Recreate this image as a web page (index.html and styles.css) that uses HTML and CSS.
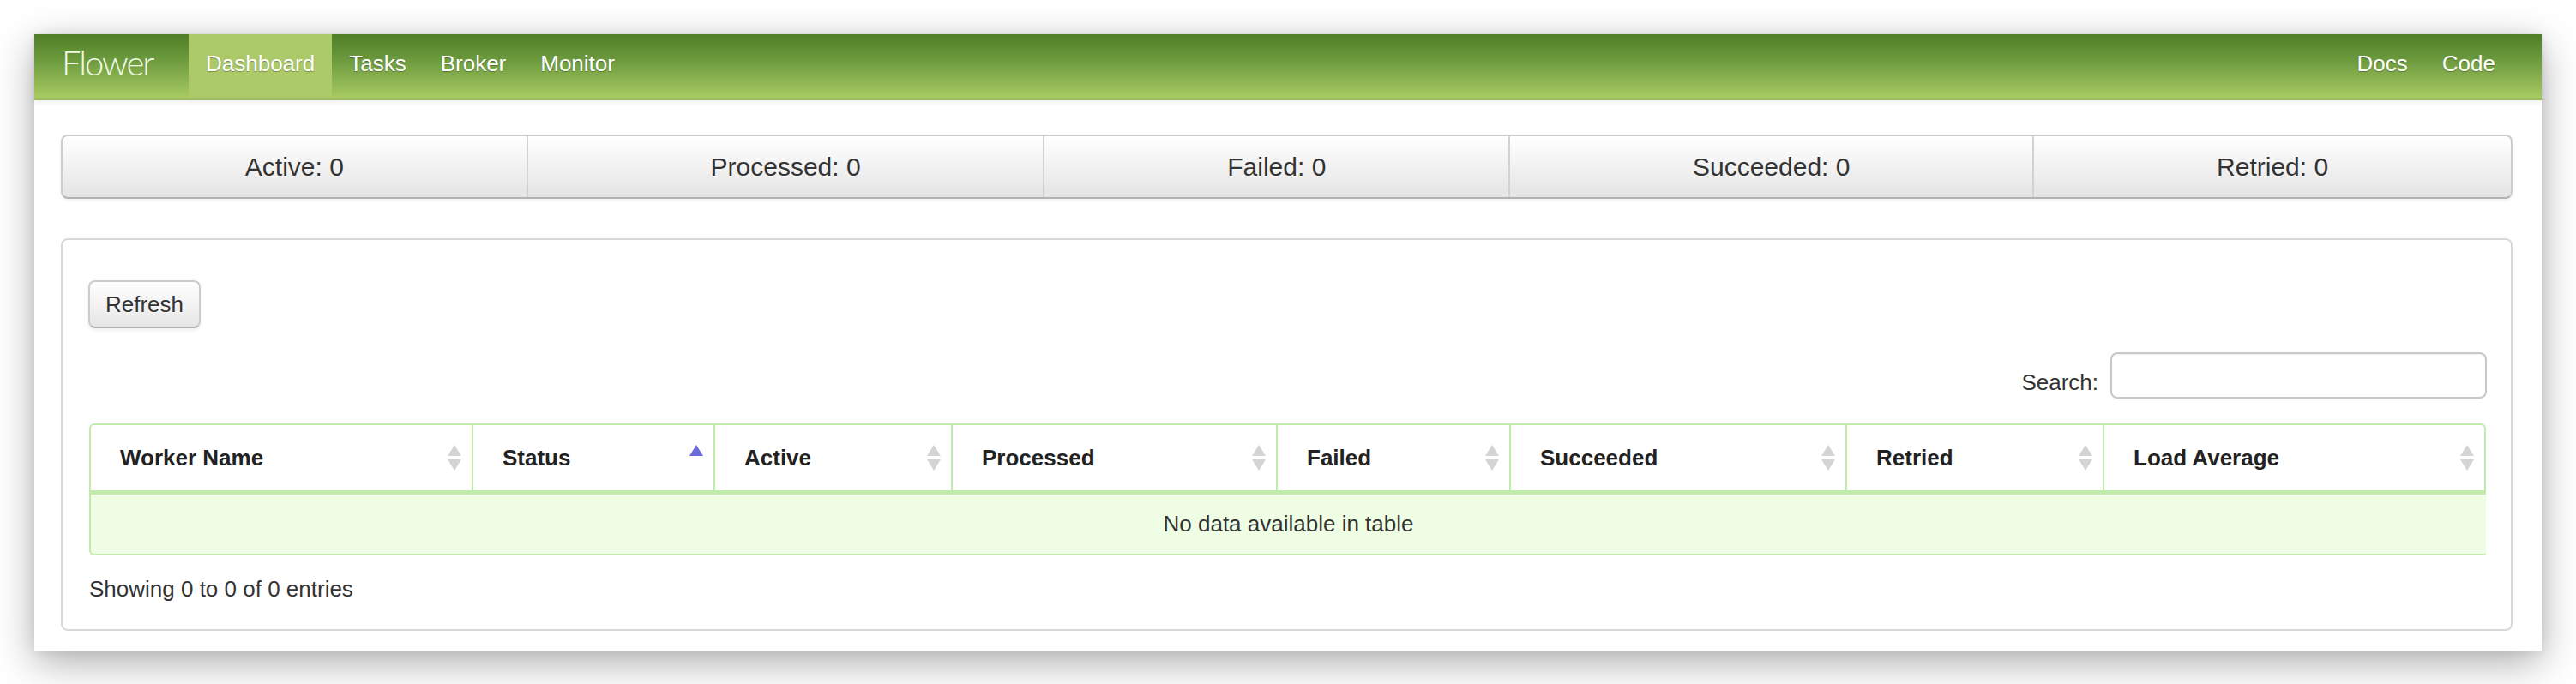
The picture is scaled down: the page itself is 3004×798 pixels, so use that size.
FILE: index.html
```html
<!DOCTYPE html>
<html lang="en">
<head>
<meta charset="utf-8">
<title>Flower</title>
<link rel="stylesheet" href="styles.css">
</head>
<body>
<div class="window">
  <header class="navbar">
    <a class="brand">Flower</a>
    <ul class="nav">
      <li class="active"><a>Dashboard</a></li>
      <li><a>Tasks</a></li>
      <li><a>Broker</a></li>
      <li><a>Monitor</a></li>
    </ul>
    <ul class="nav nav-right">
      <li><a>Docs</a></li>
      <li><a>Code</a></li>
    </ul>
  </header>
  <main class="content">
    <div class="stats">
      <div class="stat">Active: 0</div>
      <div class="stat">Processed: 0</div>
      <div class="stat">Failed: 0</div>
      <div class="stat">Succeeded: 0</div>
      <div class="stat">Retried: 0</div>
    </div>
    <section class="panel">
      <div class="toolbar"><button class="btn" type="button">Refresh</button></div>
      <div class="filter"><label class="filter-label">Search:</label><input class="filter-input" type="search"></div>
      <table class="workers">
        <thead>
          <tr>
            <th class="c-name"><div class="th-inner"><span>Worker Name</span><svg class="sort" viewBox="0 0 16 30"><polygon points="8,0 16,13 0,13"/><polygon points="0,17 16,17 8,30"/></svg></div></th>
            <th class="c-status"><div class="th-inner"><span>Status</span><svg class="sort asc" viewBox="0 0 16 30"><polygon points="8,0 16,13 0,13"/></svg></div></th>
            <th class="c-active"><div class="th-inner"><span>Active</span><svg class="sort" viewBox="0 0 16 30"><polygon points="8,0 16,13 0,13"/><polygon points="0,17 16,17 8,30"/></svg></div></th>
            <th class="c-processed"><div class="th-inner"><span>Processed</span><svg class="sort" viewBox="0 0 16 30"><polygon points="8,0 16,13 0,13"/><polygon points="0,17 16,17 8,30"/></svg></div></th>
            <th class="c-failed"><div class="th-inner"><span>Failed</span><svg class="sort" viewBox="0 0 16 30"><polygon points="8,0 16,13 0,13"/><polygon points="0,17 16,17 8,30"/></svg></div></th>
            <th class="c-succeeded"><div class="th-inner"><span>Succeeded</span><svg class="sort" viewBox="0 0 16 30"><polygon points="8,0 16,13 0,13"/><polygon points="0,17 16,17 8,30"/></svg></div></th>
            <th class="c-retried"><div class="th-inner"><span>Retried</span><svg class="sort" viewBox="0 0 16 30"><polygon points="8,0 16,13 0,13"/><polygon points="0,17 16,17 8,30"/></svg></div></th>
            <th class="c-load"><div class="th-inner"><span>Load Average</span><svg class="sort" viewBox="0 0 16 30"><polygon points="8,0 16,13 0,13"/><polygon points="0,17 16,17 8,30"/></svg></div></th>
          </tr>
        </thead>
        <tbody>
          <tr><td class="empty" colspan="8">No data available in table</td></tr>
        </tbody>
      </table>
      <div class="info">Showing 0 to 0 of 0 entries</div>
    </section>
  </main>
</div>
</body>
</html>
```
FILE: styles.css
```css
* { box-sizing: border-box; }
html, body { margin: 0; padding: 0; background: #ffffff; }
body {
  padding: 40px;
  font-family: "Liberation Sans", Arial, Helvetica, sans-serif;
  font-size: 26px;
  color: #333333;
}
.window {
  width: 2924px;
  background: #ffffff;
  box-shadow: 0 14px 44px rgba(0, 0, 0, 0.32), 0 0 14px rgba(0, 0, 0, 0.08);
}

/* navbar */
.navbar {
  display: flex;
  align-items: stretch;
  height: 77px;
  padding: 0 34px 0 32px;
  background: linear-gradient(to bottom, #4f7e27 0%, #6c9a3d 40%, #a7ca63 100%);
  border-bottom: 3px solid #9cbc59;
  box-shadow: 0 2px 6px rgba(0, 0, 0, 0.08);
}
.brand {
  flex: 0 0 148px;
  display: flex;
  align-items: center;
  padding-bottom: 9px;
  font-family: Lato, "Liberation Sans", sans-serif;
  font-weight: 300;
  font-size: 40px;
  letter-spacing: -2px;
  color: #f1f8e8;
}
.nav {
  display: flex;
  margin: 0;
  padding: 0;
  list-style: none;
}
.nav-right { margin-left: auto; }
.nav li { display: flex; }
.nav a {
  display: flex;
  align-items: center;
  padding: 0 20px 6px;
  color: #ffffff;
  font-size: 26px;
  text-shadow: 0 1px 1px rgba(0, 0, 0, 0.3);
}
.nav .active a { background: #adca69; }

/* content */
.content { padding: 40px 34px 23px 31px; }

.stats {
  display: flex;
  height: 75px;
  border: 2px solid #cdcdcd;
  border-bottom-color: #b2b2b2;
  border-radius: 8px;
  background: linear-gradient(to bottom, #ffffff, #e4e4e4);
  box-shadow: 0 2px 4px rgba(0, 0, 0, 0.06);
  overflow: hidden;
}
.stat {
  flex: 1 1 auto;
  display: flex;
  align-items: center;
  justify-content: center;
  font-size: 30px;
  color: #333333;
  text-shadow: 0 1px 1px rgba(255, 255, 255, 0.75);
  white-space: nowrap;
}
.stat + .stat { border-left: 2px solid #d2d2d2; }

.panel {
  margin-top: 46px;
  border: 2px solid #d8d8d8;
  border-radius: 8px;
  padding: 47px 29px 28px 31px;
}
.toolbar { display: flex; }
.btn {
  height: 56px;
  padding: 0 18px;
  margin-left: -1px;
  font-family: inherit;
  font-size: 26px;
  color: #333333;
  background: linear-gradient(to bottom, #ffffff, #e6e6e6);
  border: 2px solid #cccccc;
  border-bottom-color: #b3b3b3;
  border-radius: 8px;
  box-shadow: 0 2px 4px rgba(0, 0, 0, 0.08);
  text-shadow: 0 1px 1px rgba(255, 255, 255, 0.75);
}
.filter {
  display: flex;
  justify-content: flex-end;
  align-items: flex-end;
  margin-top: 28px;
}
.filter-label { line-height: 38px; margin-right: 14px; }
.filter-input {
  width: 439px;
  height: 54px;
  border: 2px solid #c8c8c8;
  border-radius: 8px;
  background: #ffffff;
  box-shadow: inset 0 1px 2px rgba(0, 0, 0, 0.06);
  margin-right: -1px;
}

.workers {
  width: 100%;
  margin-top: 29px;
  table-layout: fixed;
  border-collapse: separate;
  border-spacing: 0;
}
.workers th {
  height: 83px;
  padding: 0 12px 0 34px;
  text-align: left;
  font-weight: bold;
  font-size: 26px;
  color: #222222;
  border-top: 2px solid #c0ebad;
  border-bottom: 5px solid #c0ebad;
  border-left: 2px solid #c0ebad;
}
.workers th:first-child { border-top-left-radius: 6px; }
.workers th:last-child { border-right: 2px solid #c0ebad; border-top-right-radius: 6px; }
.th-inner {
  display: flex;
  align-items: center;
  justify-content: space-between;
}
.sort { width: 16px; height: 30px; fill: #d4d4d4; flex: none; }
.sort.asc { fill: #6b6bdb; }

.c-name { width: 446px; }
.c-status { width: 282px; }
.c-active { width: 277px; }
.c-processed { width: 379px; }
.c-failed { width: 272px; }
.c-succeeded { width: 392px; }
.c-retried { width: 300px; }
.c-load { width: 447px; }

.workers td.empty {
  height: 71px;
  padding: 0;
  text-align: center;
  background: #eefde4;
  border-left: 2px solid #c0ebad;
  border-bottom: 2px solid #c0ebad;
  border-bottom-left-radius: 6px;
}
.info {
  margin-top: 20px;
  line-height: 38px;
}
```
